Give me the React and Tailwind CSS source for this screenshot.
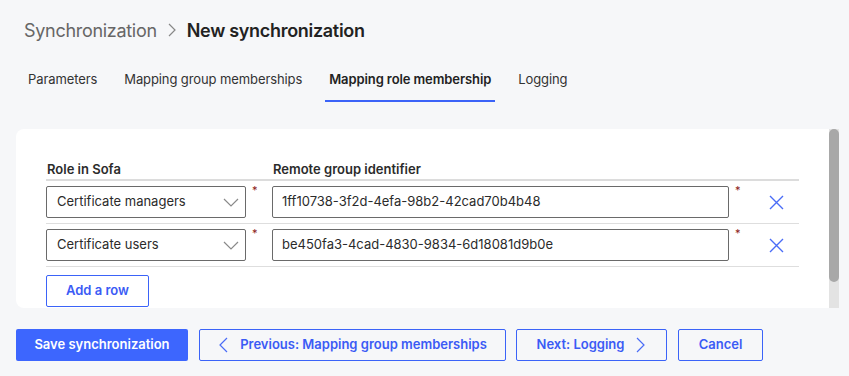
import React from 'react';

const rows = [
  { role: 'Certificate managers', id: '1ff10738-3f2d-4efa-98b2-42cad70b4b48' },
  { role: 'Certificate users', id: 'be450fa3-4cad-4830-9834-6d18081d9b0e' },
];

const tabs = ['Parameters', 'Mapping group memberships', 'Mapping role membership', 'Logging'];

function ChevronDown() {
  return (
    <svg width="16" height="9" viewBox="0 0 16 9" fill="none">
      <path d="M1 1l7 7 7-7" stroke="#8a8a8a" strokeWidth="1.2" />
    </svg>
  );
}

function CloseIcon() {
  return (
    <svg width="15" height="15" viewBox="0 0 15 15" fill="none">
      <path d="M1 1l13 13M14 1L1 14" stroke="#4a6cf7" strokeWidth="1.4" />
    </svg>
  );
}

function Chevron({ dir }) {
  return (
    <svg width="10" height="16" viewBox="0 0 10 16" fill="none">
      <path d={dir === 'left' ? 'M9 1L2 8l7 7' : 'M1 1l7 7-7 7'} stroke="#4a6cf7" strokeWidth="1.2" />
    </svg>
  );
}

export default function App() {
  return (
    <div
      className="w-[849px] h-[376px] bg-[#f6f7f9] text-[#2b2b2b] overflow-hidden"
      style={{ fontFamily: 'Inter, "Liberation Sans", sans-serif' }}
    >
      {/* Fil d'Ariane */}
      <div className="flex items-center h-[58px] pl-[24px] pt-[2px] text-[18px] tracking-[-0.3px]">
        <span className="text-[#666]">Synchronization</span>
        <span className="mx-[11px] flex items-center">
          <svg width="8" height="14" viewBox="0 0 8 14" fill="none">
            <path d="M1 1l6 6-6 6" stroke="#888" strokeWidth="1.2" />
          </svg>
        </span>
        <span className="font-semibold text-[#222]">New synchronization</span>
      </div>

      {/* Onglets */}
      <div className="flex gap-[19px] pl-[24px] h-[44px] text-[13px] tracking-[-0.1px]">
        {tabs.map((t, i) => (
          <div
            key={t}
            className={
              i === 2
                ? 'px-[4px] pt-[12px] font-semibold text-[#222] border-b-2 border-[#3b63f8]'
                : 'px-[4px] pt-[12px] text-[#333]'
            }
          >
            {t}
          </div>
        ))}
      </div>

      {/* Carte */}
      <div className="flex mt-[27px] ml-[16px] w-[823px] h-[179px]">
        <div className="flex-1 bg-white rounded-l-[8px] pl-[30px] pr-[30px] pt-[31px] overflow-hidden">
          <div className="w-[753px]">
            <div className="flex h-[21px] border-b-2 border-[#dcdcdc] text-[13px] font-semibold text-[#2b2b2b]">
              <div className="w-[227px] pl-[1px]">Role in Sofa</div>
              <div>Remote group identifier</div>
            </div>
            {rows.map((r) => (
              <div key={r.id} className="flex items-center h-[43px] border-b border-[#dedede]">
                <div className="w-[200px] h-[32px] border border-[#6a6a6a] rounded-[2px] flex items-center justify-between pl-[10px] pr-[6px] text-[13px] text-[#2b2b2b]">
                  <span>{r.role}</span>
                  <ChevronDown />
                </div>
                <div className="w-[26px] self-start pt-[4px] pl-[6px] text-[#8b1a1a] text-[11px] leading-none">*</div>
                <div className="w-[457px] h-[32px] border border-[#6a6a6a] rounded-[2px] flex items-center pl-[9px] text-[13px] text-[#2b2b2b]">
                  {r.id}
                </div>
                <div className="w-[40px] self-start pt-[4px] pl-[6px] text-[#8b1a1a] text-[11px] leading-none">*</div>
                <div className="flex items-center">
                  <CloseIcon />
                </div>
              </div>
            ))}
            <button className="mt-[8px] w-[103px] h-[32px] border border-[#3b63f8] rounded-[2px] text-[13px] font-semibold text-[#3b5bf5]">
              Add a row
            </button>
          </div>
        </div>
        <div className="w-[10px] bg-[#e3e3e3] flex flex-col">
          <div className="h-[153px] bg-[#a8a8a8] rounded-full"></div>
        </div>
      </div>

      {/* Boutons */}
      <div className="flex gap-[11px] ml-[16px] mt-[21px] text-[13px] font-semibold">
        <button className="w-[172px] h-[32px] bg-[#3d66fe] rounded-[2px] text-white">
          Save synchronization
        </button>
        <button className="w-[307px] h-[32px] border border-[#3b63f8] rounded-[2px] text-[#3b5bf5] flex items-center justify-center gap-[12px]">
          <Chevron dir="left" />
          <span>Previous: Mapping group memberships</span>
        </button>
        <button className="w-[151px] h-[32px] border border-[#3b63f8] rounded-[2px] text-[#3b5bf5] flex items-center justify-center gap-[12px] -ml-[1px]">
          <span>Next: Logging</span>
          <Chevron dir="right" />
        </button>
        <button className="w-[85px] h-[32px] border border-[#3b63f8] rounded-[2px] text-[#3b5bf5]">
          Cancel
        </button>
      </div>
    </div>
  );
}
